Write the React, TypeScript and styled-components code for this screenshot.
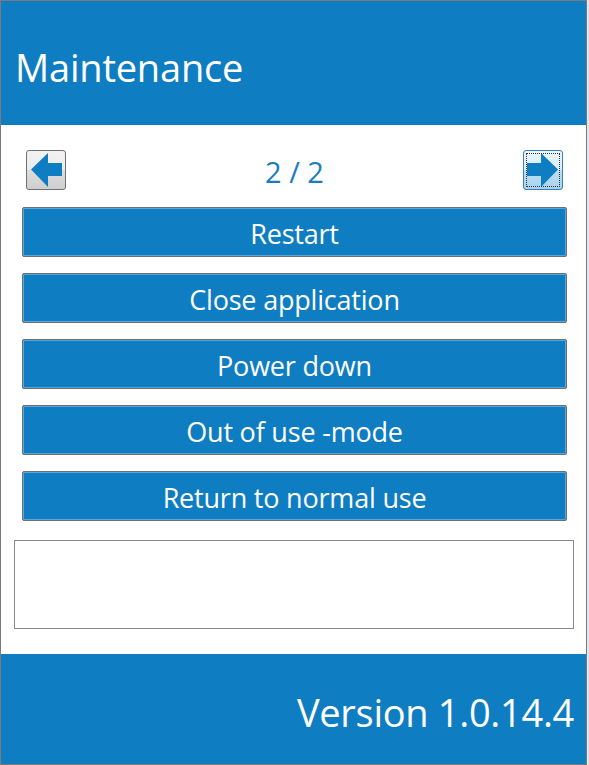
import React from 'react';
import styled, { createGlobalStyle } from 'styled-components';

/* Style
---------------------------------- */

const GlobalStyle = createGlobalStyle`
	html, body {
		margin: 0;
		padding: 0;
		background: #dfe6ec;
	}

	* {
		box-sizing: border-box;
	}
`;

const Frame = styled.div`
	width: 587px;
	height: 765px;
	display: flex;
	flex-direction: column;
	background: #fff;
	border: 1px solid #7a7a7a;
	font-family: 'Open Sans', 'Noto Sans', sans-serif;
`;

const Header = styled.header`
	height: 124px;
	flex-shrink: 0;
	display: flex;
	align-items: center;
	padding: 7px 0 0 14px;
	background-color: #0f7dc2;
	color: #fff;
	font-size: 38px;
	letter-spacing: -0.2px;
`;

const Content = styled.main`
	flex: 1;
	display: flex;
	flex-direction: column;
	padding: 25px 12px 0 13px;
`;

const Nav = styled.div`
	height: 40px;
	display: flex;
	align-items: center;
	justify-content: space-between;
	padding: 0 11px 0 12px;
`;

const Page = styled.div`
	color: #1a7cc0;
	font-size: 29px;
	padding-top: 2px;
`;

const ArrowButton = styled.button<{ $focused?: boolean }>`
	position: relative;
	width: 40px;
	height: 40px;
	padding: 0;
	display: flex;
	align-items: center;
	justify-content: center;
	border-radius: 3px;
	border: 1px solid ${({ $focused }) => ($focused ? '#3c7fb1' : '#707070')};
	background: ${({ $focused }) =>
		$focused
			? 'linear-gradient(#eaf5fc 0%, #d9eefa 50%, #bedff3 51%, #a7d3ef 100%)'
			: 'linear-gradient(#f2f2f2 0%, #ebebeb 50%, #dddddd 51%, #cfcfcf 100%)'};

	&::after {
		content: '';
		display: ${({ $focused }) => ($focused ? 'block' : 'none')};
		position: absolute;
		inset: 2px;
		border: 1px dotted #333;
	}

	svg {
		display: block;
	}
`;

const List = styled.div`
	display: flex;
	flex-direction: column;
	gap: 16px;
	margin: 17px 7px 0 8px;
`;

const ActionButton = styled.button`
	height: 50px;
	width: 100%;
	border: 1px solid #6f6f6f;
	border-radius: 2px;
	box-shadow: inset 0 0 0 1px #5aa6da;
	background-color: #0f7dc2;
	color: #fff;
	font-family: inherit;
	font-size: 27px;
	letter-spacing: -0.2px;
	padding: 3px 0 0 0;
	cursor: pointer;
`;

const Output = styled.div`
	height: 89px;
	margin: 19px 0 0 0;
	border: 1px solid #8a8a8a;
`;

const Footer = styled.footer`
	height: 110px;
	flex-shrink: 0;
	display: flex;
	align-items: center;
	justify-content: flex-end;
	padding: 6px 12px 0 0;
	background-color: #0f7dc2;
	color: #fff;
	font-size: 38px;
	letter-spacing: -0.3px;
`;

/* Component
------------------------------ */

const LeftArrow = () => (
	<svg width="34" height="36" viewBox="0 0 34 36">
		<polygon points="2,17.5 19,1 19,11 33,11 33,24 19,24 19,35" fill="#0f7dc2" />
	</svg>
);

const RightArrow = () => (
	<svg width="34" height="36" viewBox="0 0 34 36">
		<polygon points="32,17.5 15,1 15,11 1,11 1,24 15,24 15,35" fill="#0f7dc2" />
	</svg>
);

const actions = ['Restart', 'Close application', 'Power down', 'Out of use -mode', 'Return to normal use'];

const App = () => {
	return (
		<>
			<GlobalStyle />
			<Frame>
				<Header>Maintenance</Header>

				<Content>
					<Nav>
						<ArrowButton aria-label="Previous page">
							<LeftArrow />
						</ArrowButton>
						<Page>2 / 2</Page>
						<ArrowButton $focused aria-label="Next page">
							<RightArrow />
						</ArrowButton>
					</Nav>

					<List>
						{actions.map((label) => (
							<ActionButton key={label}>{label}</ActionButton>
						))}
					</List>

					<Output />
				</Content>

				<Footer>Version 1.0.14.4</Footer>
			</Frame>
		</>
	);
};

export default App;
